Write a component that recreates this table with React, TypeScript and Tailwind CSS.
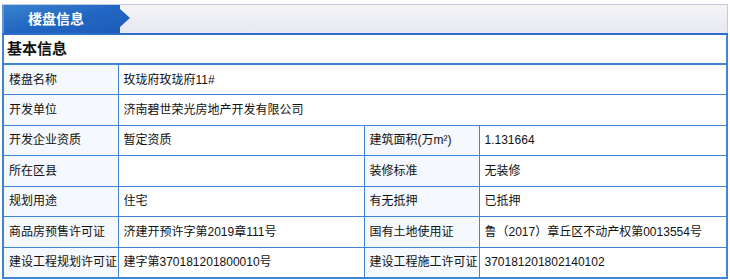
import React from 'react';

const font = { fontFamily: '"Liberation Sans", "Noto Sans CJK SC", sans-serif' };

type Row = { label: string; value: string; label2?: string; value2?: string };

const rows: Row[] = [
	{ label: '楼盘名称', value: '玫珑府玫珑府11#' },
	{ label: '开发单位', value: '济南碧世荣光房地产开发有限公司' },
	{ label: '开发企业资质', value: '暂定资质', label2: '建筑面积(万m²)', value2: '1.131664' },
	{ label: '所在区县', value: '', label2: '装修标准', value2: '无装修' },
	{ label: '规划用途', value: '住宅', label2: '有无抵押', value2: '已抵押' },
	{ label: '商品房预售许可证', value: '济建开预许字第2019章111号', label2: '国有土地使用证', value2: '鲁（2017）章丘区不动产权第0013554号' },
	{ label: '建设工程规划许可证', value: '建字第370181201800010号', label2: '建设工程施工许可证', value2: '370181201802140102' },
];

const labelCls = 'border border-[#3f85d3] bg-[#f5f8fc] pl-[5px] text-left font-normal';
const valueCls = 'border border-[#3f85d3] bg-white pl-[5px] text-left';

const App = () => {
	return (
		<div className="w-[730px] h-[280px] bg-white text-[#111] pl-[2px] pt-[4px] pr-[2px]" style={font}>
			<div className="w-[726px] border-t border-r border-[#c3c9e1] h-[29px] bg-gradient-to-b from-[#f4f4f6] to-[#e7e8f1] flex items-center">
				<div className="h-[28px] w-[129px] border-l-2 border-[#5d97d6] bg-gradient-to-br from-[#3a83cf] via-[#2266c2] to-[#1d5cb8] [clip-path:polygon(0_0,118px_0,118px_4px,128px_13px,118px_22px,118px_28px,0_28px)] flex items-center">
					<div className="w-[24px] shrink-0"></div>
					<span className="text-white font-bold text-[14px] leading-none whitespace-nowrap">楼盘信息</span>
				</div>
			</div>
			<div className="w-[726px] h-[2px] bg-[#2c6fcb]"></div>
			<div className="w-[726px] h-[28px] border-l-2 border-r-2 border-[#3f85d3] flex items-center pl-[3px] font-bold text-[15px]">
				基本信息
			</div>
			<table className="w-[726px] border-collapse border-2 border-[#3f85d3] text-[12px] table-fixed">
				<colgroup>
					<col className="w-[115px]" />
					<col className="w-[246px]" />
					<col className="w-[115px]" />
					<col />
				</colgroup>
				<tbody>
					{rows.map((r, i) => (
						<tr key={i} className="h-[30.5px]">
							<th className={labelCls}>{r.label}</th>
							{r.label2 === undefined ? (
								<td className={valueCls} colSpan={3}>{r.value}</td>
							) : (
								<>
									<td className={valueCls}>{r.value}</td>
									<th className={labelCls}>{r.label2}</th>
									<td className={valueCls}>{r.value2}</td>
								</>
							)}
						</tr>
					))}
				</tbody>
			</table>
		</div>
	);
};

export default App;
